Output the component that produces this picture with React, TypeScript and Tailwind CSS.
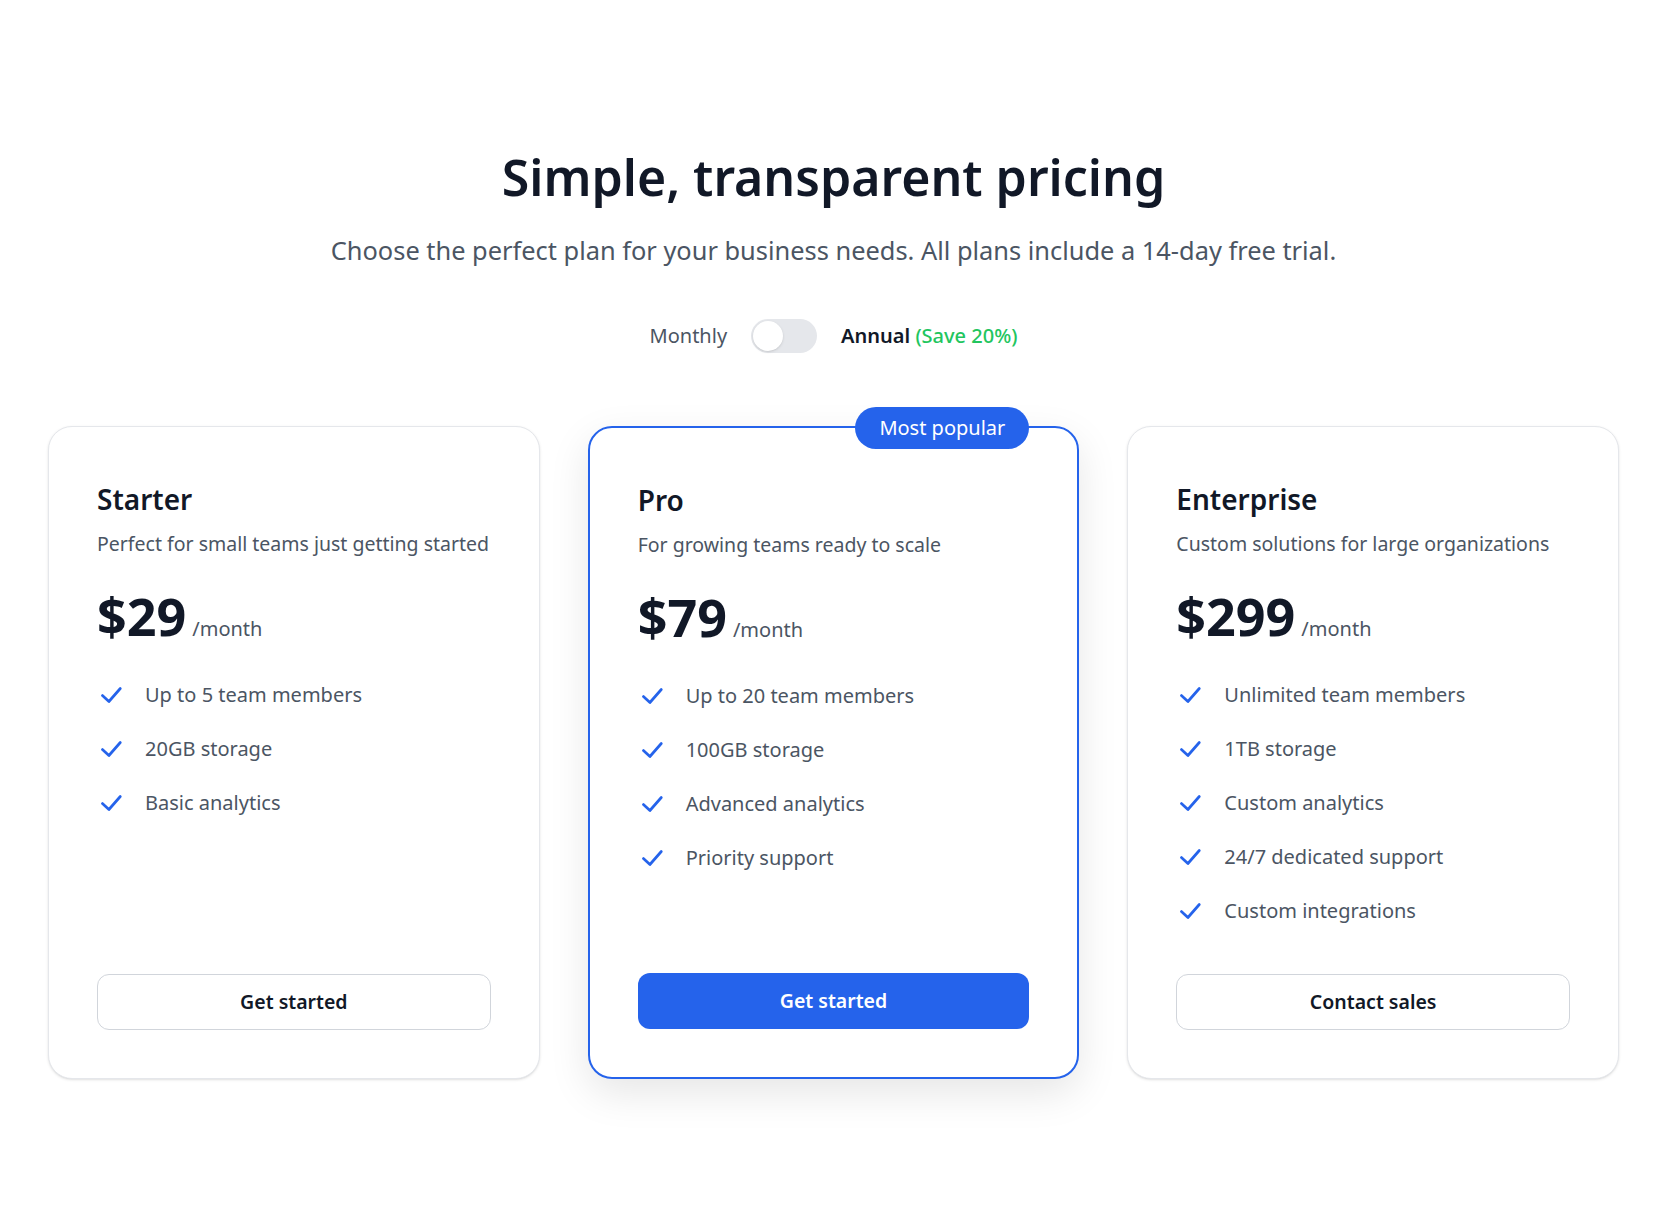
import { useState } from "react";

type Plan = {
  name: string;
  description: string;
  price: number;
  features: string[];
  cta: string;
  featured?: boolean;
};

const PLANS: Plan[] = [
  {
    name: "Starter",
    description: "Perfect for small teams just getting started",
    price: 29,
    features: ["Up to 5 team members", "20GB storage", "Basic analytics"],
    cta: "Get started",
  },
  {
    name: "Pro",
    description: "For growing teams ready to scale",
    price: 79,
    features: [
      "Up to 20 team members",
      "100GB storage",
      "Advanced analytics",
      "Priority support",
    ],
    cta: "Get started",
    featured: true,
  },
  {
    name: "Enterprise",
    description: "Custom solutions for large organizations",
    price: 299,
    features: [
      "Unlimited team members",
      "1TB storage",
      "Custom analytics",
      "24/7 dedicated support",
      "Custom integrations",
    ],
    cta: "Contact sales",
  },
];

function CheckIcon() {
  return (
    <svg className="w-[26px] h-[26px] flex-shrink-0 text-[#2563eb]" fill="none" viewBox="0 0 24 24" stroke="currentColor" strokeWidth={2.5}>
      <path strokeLinecap="round" strokeLinejoin="round" d="M5 12.5l6 5.5L21.5 6" />
    </svg>
  );
}

function PlanCard({ plan }: { plan: Plan }) {
  const featured = !!plan.featured;
  return (
    <div
      className={`relative flex flex-col rounded-3xl bg-white px-12 pt-[54px] pb-12 h-[653px] ${
        featured
          ? "border-2 border-[#2563eb] shadow-[0_14px_40px_rgba(0,0,0,0.10)]"
          : "border border-[#e5e7eb] shadow-sm"
      }`}
    >
      {featured && (
        <span className="absolute top-0 right-12 -translate-y-1/2 rounded-full bg-[#2563eb] px-6 py-[7px] text-xl leading-7 text-white">
          Most popular
        </span>
      )}
      <h3 className="text-[28px] font-semibold leading-9 text-[#111827]">{plan.name}</h3>
      <p className="mt-[13px] text-[19.5px] leading-7 text-[#4b5563]">{plan.description}</p>
      <div className="mt-[28px] flex items-baseline gap-1.5">
        <span className="text-[52px] font-bold leading-[60px] text-[#111827]">${plan.price}</span>
        <span className="text-xl text-[#4b5563]">/month</span>
      </div>
      <ul className="mt-[35px] flex flex-col gap-[26px]">
        {plan.features.map((f) => (
          <li key={f} className="flex items-center gap-[22px] text-xl leading-7 text-[#4b5563]">
            <CheckIcon />
            <span>{f}</span>
          </li>
        ))}
      </ul>
      <button
        className={`mt-auto h-14 w-full rounded-xl text-[19.5px] font-semibold ${
          featured
            ? "bg-[#2563eb] text-white"
            : "border border-[#d1d5db] bg-white text-[#111827]"
        }`}
      >
        {plan.cta}
      </button>
    </div>
  );
}

export default function App() {
  const [annual, setAnnual] = useState(false);

  return (
    <div className="min-h-screen bg-white px-12 pt-[150px] pb-24 font-['Noto_Sans',sans-serif]">
      {/* Header */}
      <div className="text-center">
        <h1 className="text-[50px] font-semibold leading-[54px] text-[#111827]">Simple, transparent pricing</h1>
        <p className="mt-[30px] text-[25.4px] leading-8 text-[#4b5563]">
          Choose the perfect plan for your business needs. All plans include a 14-day free trial.
        </p>
      </div>

      {/* Billing toggle */}
      <div className="mt-[53px] flex items-center justify-center gap-6 text-xl">
        <span className="text-[#4b5563]">Monthly</span>
        <button
          onClick={() => setAnnual(!annual)}
          className="relative h-[34px] w-[66px] rounded-full bg-[#e5e7eb] p-0.5"
        >
          <span
            className={`block h-[30px] w-[30px] rounded-full bg-white shadow ${annual ? "translate-x-8" : ""}`}
          />
        </button>
        <span className="font-semibold text-[#111827]">
          Annual <span className="font-medium text-[#22c55e]">(Save 20%)</span>
        </span>
      </div>

      {/* Plans */}
      <div className="mt-[73px] grid grid-cols-3 gap-12">
        {PLANS.map((plan) => (
          <PlanCard key={plan.name} plan={plan} />
        ))}
      </div>
    </div>
  );
}
